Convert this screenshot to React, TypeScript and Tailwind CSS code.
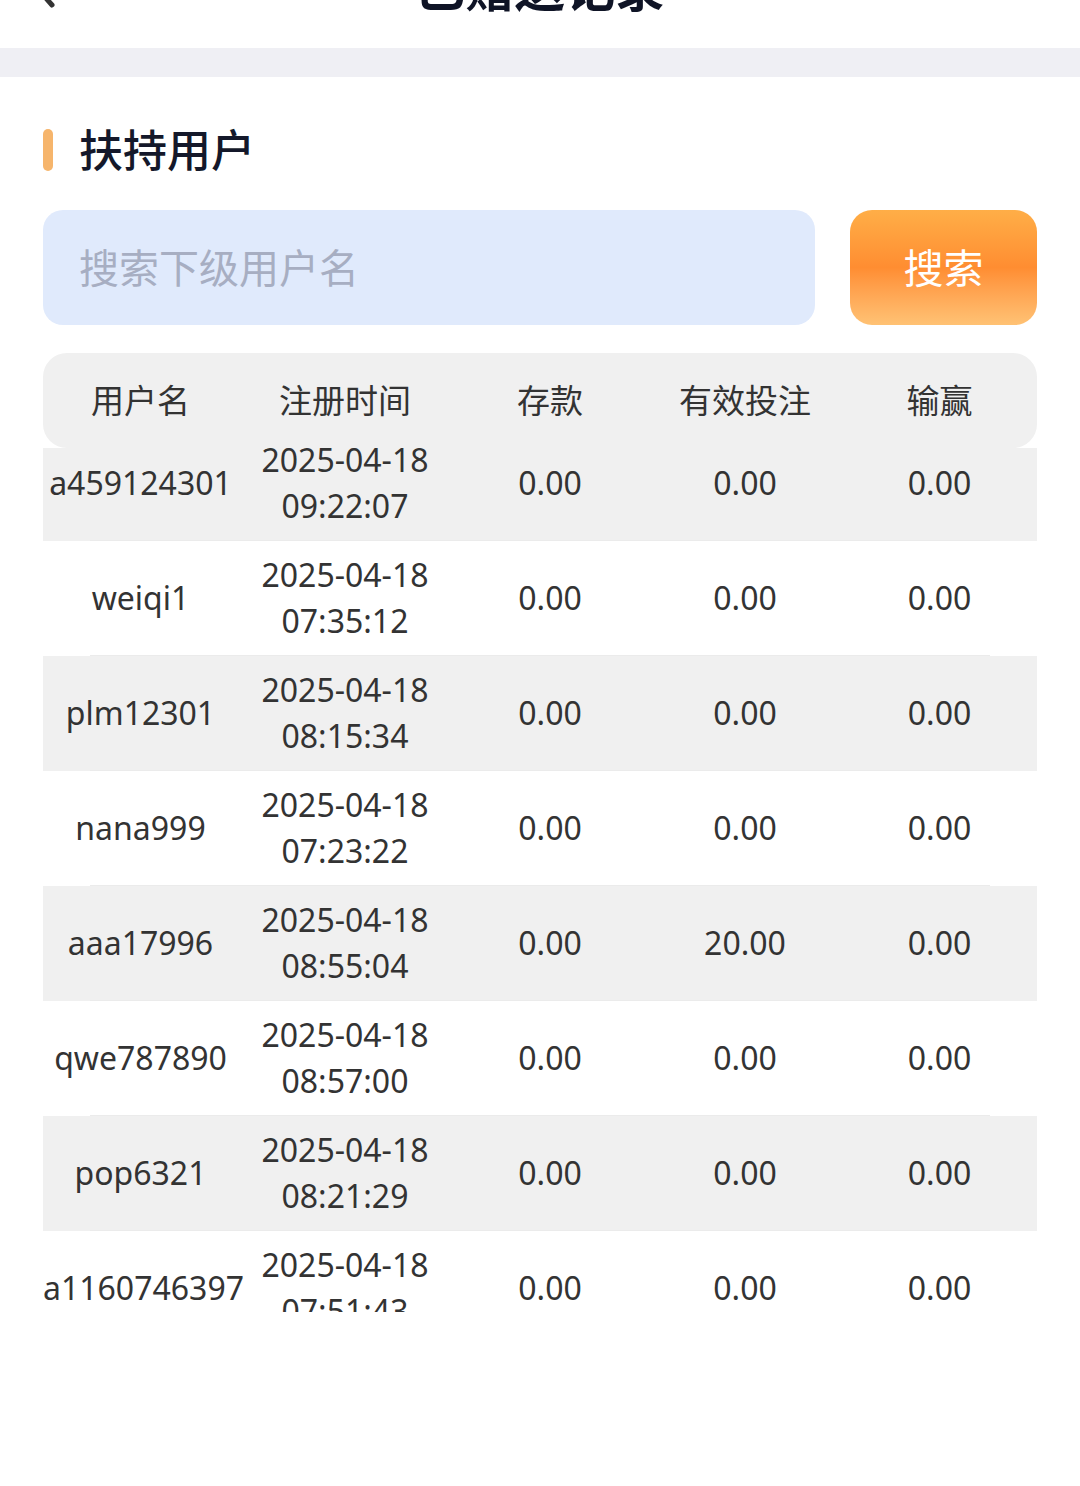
import React from 'react';

const ROWS = [
  { name: 'a459124301', date: '2025-04-18', time: '09:22:07', deposit: '0.00', bet: '0.00', win: '0.00' },
  { name: 'weiqi1', date: '2025-04-18', time: '07:35:12', deposit: '0.00', bet: '0.00', win: '0.00' },
  { name: 'plm12301', date: '2025-04-18', time: '08:15:34', deposit: '0.00', bet: '0.00', win: '0.00' },
  { name: 'nana999', date: '2025-04-18', time: '07:23:22', deposit: '0.00', bet: '0.00', win: '0.00' },
  { name: 'aaa17996', date: '2025-04-18', time: '08:55:04', deposit: '0.00', bet: '20.00', win: '0.00' },
  { name: 'qwe787890', date: '2025-04-18', time: '08:57:00', deposit: '0.00', bet: '0.00', win: '0.00' },
  { name: 'pop6321', date: '2025-04-18', time: '08:21:29', deposit: '0.00', bet: '0.00', win: '0.00' },
  { name: 'a1160746397', date: '2025-04-18', time: '07:51:43', deposit: '0.00', bet: '0.00', win: '0.00' },
];

const COLS = 'grid grid-cols-[195px_214px_196px_194px_195px]';

export default function App() {
  return (
    <div
      className="min-h-screen w-full bg-white overflow-hidden"
      style={{ fontFamily: '"Noto Sans", "Noto Sans CJK SC", sans-serif' }}
    >
      {/* Nav bar (scrolled partly out of view) */}
      <header className="relative h-[120px] -mt-[72px] flex items-center justify-center bg-white">
        <svg className="absolute left-[30px] top-[40px] w-[30px] h-[40px]" viewBox="0 0 30 40" fill="none">
          <path d="M22 3 L7 20 L22 37" stroke="#333" strokeWidth="5" strokeLinecap="round" strokeLinejoin="round" />
        </svg>
        <h1 className="text-[50px] leading-[50px] font-bold text-[#0f1426]">已赠送记录</h1>
      </header>
      <div className="h-[29px] bg-[#efeff4]" />

      <main className="px-[43px]">
        {/* Section title */}
        <div className="mt-[52px] h-[42px] flex items-center gap-[26px]">
          <span className="w-[10px] h-[42px] rounded-full bg-[#f6b56c]" />
          <h2 className="text-[44px] leading-[44px] font-medium text-[#14182a]">扶持用户</h2>
        </div>

        {/* Search */}
        <div className="mt-[39px] flex items-center gap-[35px]">
          <div className="w-[772px] h-[115px] rounded-[20px] bg-[#e0eafc] flex items-center px-[36px]">
            <input
              className="w-full bg-transparent outline-none text-[40px] text-[#333] placeholder:text-[#a7aec2]"
              placeholder="搜索下级用户名"
            />
          </div>
          <button className="w-[187px] h-[115px] rounded-[22px] bg-gradient-to-b from-[#ffae47] via-[#ff8d31] to-[#ffc274] text-white text-[40px]">
            搜索
          </button>
        </div>

        {/* Table */}
        <div className="mt-[28px]">
          <div className={`${COLS} h-[95px] items-center rounded-[24px] bg-[#f0f0f0] text-[33px] text-[#333] text-center`}>
            <div>用户名</div>
            <div>注册时间</div>
            <div>存款</div>
            <div>有效投注</div>
            <div>输赢</div>
          </div>
          <div className="h-[864px] overflow-hidden">
            <div className="-mt-[22px]">
              {ROWS.map((r, i) => (
                <div key={r.name} className={i % 2 === 0 ? 'bg-[#f0f0f0]' : 'bg-white'}>
                  <div className={`${COLS} h-[114px] items-center text-center text-[32px] leading-[46px] text-[#333]`}>
                    <div className="whitespace-nowrap">{r.name}</div>
                    <div className="flex flex-col items-center">
                      <span>{r.date}</span>
                      <span>{r.time}</span>
                    </div>
                    <div>{r.deposit}</div>
                    <div>{r.bet}</div>
                    <div>{r.win}</div>
                  </div>
                  <div className="mx-[47px] h-px bg-[#ebebeb]" />
                </div>
              ))}
            </div>
          </div>
        </div>
      </main>
    </div>
  );
}
